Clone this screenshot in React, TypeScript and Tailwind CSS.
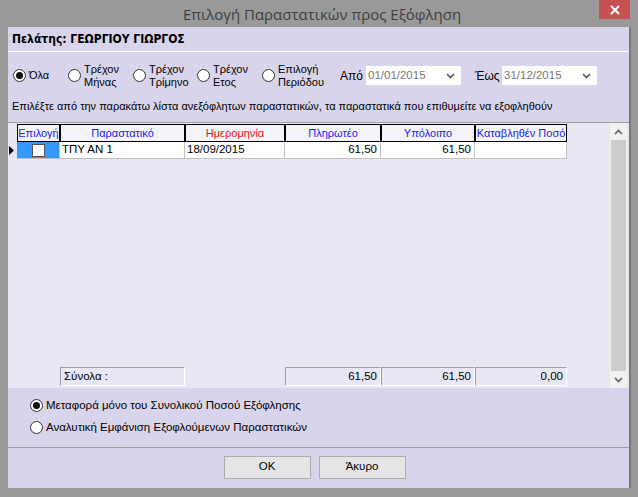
import React from 'react';

const font = { fontFamily: '"Liberation Sans", Arial, sans-serif' };

function Radio({ checked = false }: { checked?: boolean }) {
  return (
    <span className="w-[13px] h-[13px] rounded-full border border-[#333] bg-white flex items-center justify-center shrink-0">
      {checked && <span className="w-[7px] h-[7px] rounded-full bg-[#111]" />}
    </span>
  );
}

function Option({ label, checked, width }: { label: React.ReactNode; checked?: boolean; width: string }) {
  return (
    <div className={`flex items-center gap-[3px] ${width}`}>
      <Radio checked={checked} />
      <div className="leading-[13px]">{label}</div>
    </div>
  );
}

function DateBox({ value }: { value: string }) {
  return (
    <div className="w-[95px] h-[19px] bg-white flex items-center justify-between pl-[2px] pr-[6px] text-[#777] text-[11.5px]">
      <span>{value}</span>
      <svg width="9" height="6" viewBox="0 0 9 6">
        <path d="M1 1 L4.5 4.5 L8 1" stroke="#555" strokeWidth="1.6" fill="none" />
      </svg>
    </div>
  );
}

const cols = [
  { title: 'Επιλογή', w: 'w-[43px]', color: 'text-[#1a1aff]' },
  { title: 'Παραστατικό', w: 'w-[125px]', color: 'text-[#1a1aff]' },
  { title: 'Ημερομηνία', w: 'w-[100px]', color: 'text-[#ee1111]' },
  { title: 'Πληρωτέο', w: 'w-[96px]', color: 'text-[#1a1aff]' },
  { title: 'Υπόλοιπο', w: 'w-[94px]', color: 'text-[#1a1aff]' },
  { title: 'Καταβληθέν Ποσό', w: 'w-[92px]', color: 'text-[#1a1aff]' },
];

const totalCell = 'border-t border-l border-[#a0a0a0] border-b border-b-white border-r border-r-white flex items-center';

export default function App() {
  return (
    <div className="w-[638px] h-[497px] bg-[#999999] flex flex-col overflow-hidden text-[11px] text-black" style={font}>
      {/* Title bar */}
      <div className="h-[27px] flex items-start shrink-0">
        <div className="flex-1 text-[15px] text-[#404040] pl-[183px] pt-[3px]" style={{ fontFamily: '"Open Sans", sans-serif' }}>
          Επιλογή Παραστατικών προς Εξόφληση
        </div>
        <div className="w-[31px] h-[19px] bg-[#c75050] flex items-center justify-center mr-[8px]">
          <svg width="10" height="10" viewBox="0 0 10 10">
            <path d="M1 1 L9 9 M9 1 L1 9" stroke="white" strokeWidth="2" />
          </svg>
        </div>
      </div>

      <div className="flex flex-1 min-h-0">
        <div className="w-[8px] shrink-0" />
        <div className="w-[621px] bg-[#d8d4eb] flex flex-col">
          {/* Customer header */}
          <div className="h-[25px] flex items-center pl-[4px] font-bold text-[12px] border-b border-white" style={{ fontFamily: '"DejaVu Sans Condensed", "DejaVu Sans", sans-serif' }}>
            Πελάτης: ΓΕΩΡΓΙΟΥ ΓΙΩΡΓΟΣ
          </div>

          {/* Filter row */}
          <div className="h-[45px] flex items-center pl-[5px] pt-[2px]">
            <Option width="w-[55px]" checked label="Όλα" />
            <Option width="w-[65px]" label={<>Τρέχον<br />Μήνας</>} />
            <Option width="w-[64px]" label={<>Τρέχον<br />Τρίμηνο</>} />
            <Option width="w-[65px]" label={<>Τρέχον<br />Ετος</>} />
            <Option width="w-[78px]" label={<>Επιλογή<br />Περιόδου</>} />
            <span className="w-[26px] text-[12px]">Από</span>
            <DateBox value="01/01/2015" />
            <span className="w-[41px] text-[12px] pl-[14px]">Έως</span>
            <DateBox value="31/12/2015" />
          </div>

          <div className="h-[19px] pl-[4px] flex items-center">
            Επιλέξτε από την παρακάτω λίστα ανεξόφλητων παραστατικών, τα παραστατικά που επιθυμείτε να εξοφληθούν
          </div>

          {/* Grid */}
          <div className="mt-[6px] h-[266px] bg-[#e9e7f4] border-t border-[#a0a0a0] flex">
            <div className="flex-1 flex flex-col pt-[1px]">
              <div className="flex h-[18px]">
                <div className="w-[9px]" />
                {cols.map(c => (
                  <div key={c.title} className={`${c.w} ${c.color} border border-black bg-[#f4f3fa] flex items-center justify-center`}>
                    {c.title}
                  </div>
                ))}
              </div>
              <div className="flex h-[17px] text-[11.5px]">
                <div className="w-[9px] flex items-center pl-[1px]">
                  <svg width="5" height="9" viewBox="0 0 5 9"><path d="M0 0 L5 4.5 L0 9 Z" fill="black" /></svg>
                </div>
                <div className="w-[43px] bg-[#3399ff] border-b border-r border-[#c0c0c0] flex items-center justify-center">
                  <span className="w-[13px] h-[13px] bg-white border border-[#555]" />
                </div>
                <div className="w-[125px] bg-white border-b border-r border-[#c0c0c0] flex items-center pl-[2px]">ΤΠΥ ΑΝ 1</div>
                <div className="w-[100px] bg-white border-b border-r border-[#c0c0c0] flex items-center pl-[2px]">18/09/2015</div>
                <div className="w-[96px] bg-white border-b border-r border-[#c0c0c0] flex items-center justify-end pr-[3px]">61,50</div>
                <div className="w-[94px] bg-white border-b border-r border-[#c0c0c0] flex items-center justify-end pr-[3px]">61,50</div>
                <div className="w-[92px] bg-white border-b border-r border-[#c0c0c0]" />
              </div>
              <div className="flex-1" />
              <div className="flex h-[19px] mb-[2px] text-[11.5px]">
                <div className="w-[52px]" />
                <div className={`w-[125px] ${totalCell} pl-[3px]`}>Σύνολα :</div>
                <div className="w-[100px]" />
                <div className={`w-[96px] ${totalCell} justify-end pr-[3px]`}>61,50</div>
                <div className={`w-[94px] ${totalCell} justify-end pr-[3px]`}>61,50</div>
                <div className={`w-[92px] ${totalCell} justify-end pr-[3px]`}>0,00</div>
              </div>
            </div>
            {/* Scrollbar */}
            <div className="w-[17px] bg-[#f0f0f0] flex flex-col items-center">
              <div className="h-[17px] flex items-center justify-center">
                <svg width="9" height="6" viewBox="0 0 9 6"><path d="M1 5 L4.5 1.5 L8 5" stroke="#606060" strokeWidth="1.6" fill="none" /></svg>
              </div>
              <div className="flex-1 w-[15px] bg-[#cdcdcd]" />
              <div className="h-[17px] flex items-center justify-center">
                <svg width="9" height="6" viewBox="0 0 9 6"><path d="M1 1 L4.5 4.5 L8 1" stroke="#606060" strokeWidth="1.6" fill="none" /></svg>
              </div>
            </div>
            <div className="w-[2px]" />
          </div>

          {/* Transfer options */}
          <div className="flex flex-col pl-[22px] pt-[10px] gap-[7px] text-[11.5px]">
            <div className="flex items-center gap-[3px] h-[15px]">
              <Radio checked />
              <span>Μεταφορά μόνο του Συνολικού Ποσού Εξόφλησης</span>
            </div>
            <div className="flex items-center gap-[3px] h-[15px]">
              <Radio />
              <span>Αναλυτική Εμφάνιση Εξοφλούμενων Παραστατικών</span>
            </div>
          </div>

          <div className="flex-1" />
          <div className="border-t border-[#a0a0a0] h-[41px] flex items-center justify-center gap-[8px] pr-[8px] pb-[2px] text-[11.5px]">
            <button className="w-[87px] h-[23px] bg-[#e5e5e5] border border-[#adadad]">OK</button>
            <button className="w-[87px] h-[23px] bg-[#e5e5e5] border border-[#adadad]">Άκυρο</button>
          </div>
        </div>
        <div className="w-[2px] bg-[#777]" />
      </div>
      <div className="h-[9px] shrink-0" />
    </div>
  );
}
